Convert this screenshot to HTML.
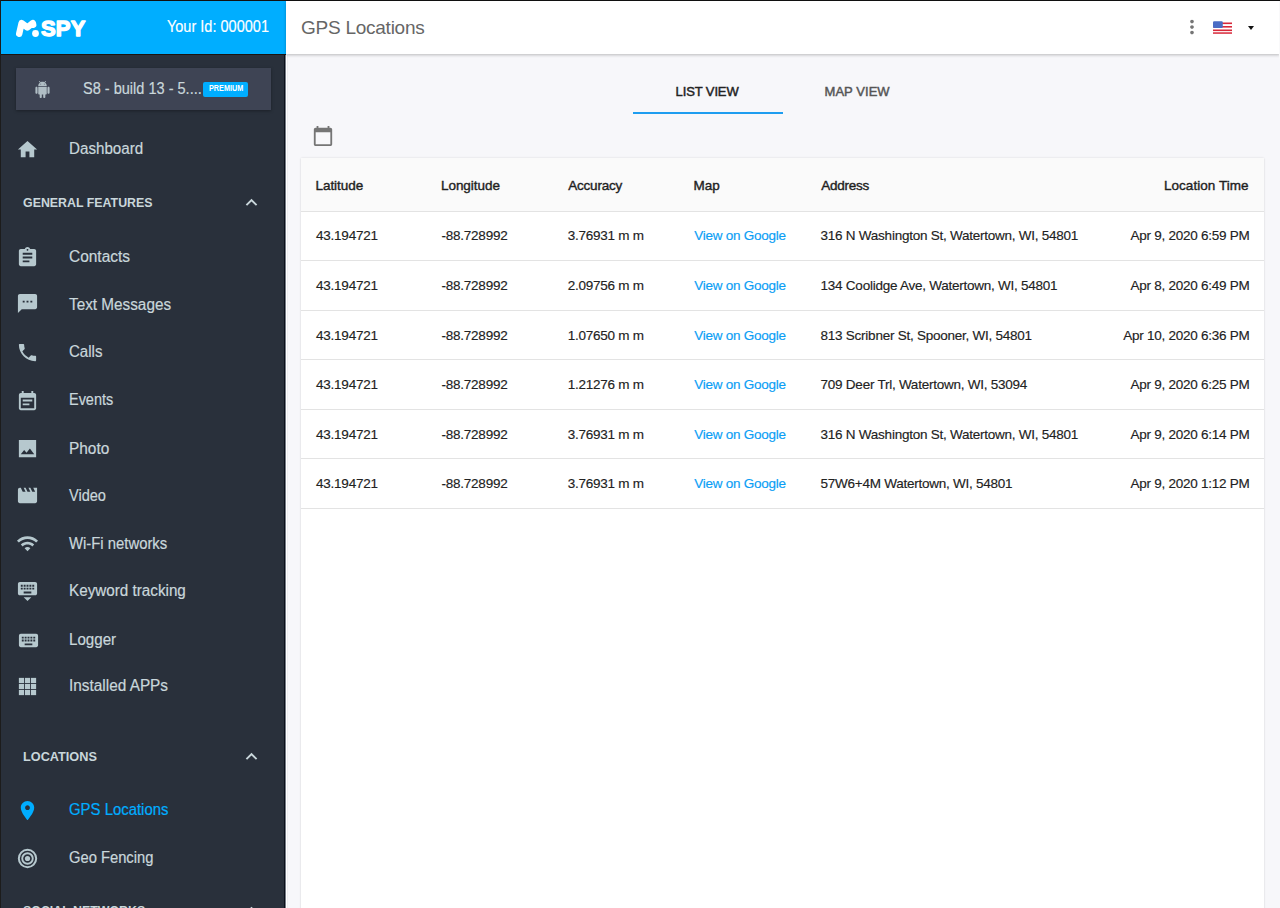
<!DOCTYPE html>
<html><head><meta charset="utf-8"><title>mSpy - GPS Locations</title>
<style>
html,body{margin:0;padding:0;}
body{width:1280px;height:908px;overflow:hidden;position:relative;background:#f7f7fa;font-family:"Liberation Sans",sans-serif;}
.t{position:absolute;white-space:nowrap;line-height:1;}
.ic{position:absolute;display:block;}
.abs{position:absolute;}
</style></head><body>
<div class="abs" style="left:0;top:0;width:1280px;height:1px;background:#111;"></div>
<div class="abs" style="left:0;top:0;width:1px;height:908px;background:#1c1c1c;"></div>
<div class="abs" style="left:1px;top:1px;width:285px;height:53px;background:#00aeff;"></div>
<div class="abs" style="left:1px;top:54px;width:285px;height:854px;background:#29303b;"></div>
<div class="abs" style="left:1px;top:54px;width:285px;height:1px;background:#1b1410;"></div>
<div class="abs" style="left:284px;top:55px;width:1px;height:853px;background:#0b101a;"></div>
<div class="abs" style="left:285px;top:55px;width:1px;height:853px;background:#767b85;"></div>
<div class="abs" style="left:286px;top:55px;width:1px;height:853px;background:#ffffff;"></div>
<div class="abs" style="left:287px;top:55px;width:1px;height:853px;background:#ededf0;"></div>
<div class="abs" style="left:286px;top:1px;width:994px;height:53px;background:#fff;box-shadow:0 1px 3px rgba(0,0,0,.25);"></div>
<div class="abs" style="left:1279px;top:1px;width:1px;height:58px;background:#f9f9fa;"></div>
<svg class="ic" style="left:14px;top:17px;width:76px;height:23px" viewBox="0 0 76 23">
<path d="M5.2 16.8 L7.6 6.1 L13.3 10.4 L18.8 6.1 L19.2 7.8" fill="none" stroke="#fff" stroke-width="6.4" stroke-linecap="round" stroke-linejoin="round"/>
<circle cx="21.5" cy="16.5" r="3.4" fill="#fff"/>
<text x="27" y="18.7" font-family="Liberation Sans" font-weight="700" font-size="22" fill="#fff" stroke="#fff" stroke-width="1.4" stroke-linejoin="round" letter-spacing="0.2">SPY</text>
</svg>
<div class="t" style="right:1011.10px;top:19.03px;font-size:15.8px;color:#fff;font-weight:400;transform:scaleX(0.92);transform-origin:100% 0;-webkit-text-stroke:0.15px #fff;">Your Id: 000001</div>
<div class="t" style="left:301.00px;top:17.72px;font-size:19px;color:#666;font-weight:400;letter-spacing:-0.25px;">GPS Locations</div>
<div class="abs" style="left:16px;top:68.4px;width:255px;height:41.6px;background:#3e4454;box-shadow:0 1px 3px rgba(0,0,0,.35);"></div>
<svg class="ic" style="left:33.80px;top:80.50px;width:17px;height:17px;color:#b0bec5;fill:#b0bec5" viewBox="0 0 24 24"><path d="M6 18c0 .55.45 1 1 1h1v3.5c0 .83.67 1.5 1.5 1.5s1.5-.67 1.5-1.5V19h2v3.5c0 .83.67 1.5 1.5 1.5s1.5-.67 1.5-1.5V19h1c.55 0 1-.45 1-1V8H6v10zM3.5 8C2.67 8 2 8.67 2 9.5v7c0 .83.67 1.5 1.5 1.5S5 17.33 5 16.5v-7C5 8.67 4.33 8 3.5 8zm17 0c-.83 0-1.5.67-1.5 1.5v7c0 .83.67 1.5 1.5 1.5s1.5-.67 1.5-1.5v-7c0-.83-.67-1.5-1.5-1.5zm-4.97-5.84l1.3-1.3c.2-.2.2-.51 0-.71-.2-.2-.51-.2-.71 0l-1.48 1.48C13.85 1.23 12.95 1 12 1c-.96 0-1.86.23-2.66.63L7.85.15c-.2-.2-.51-.2-.71 0-.2.2-.2.51 0 .71l1.31 1.31C6.97 3.26 6 5.01 6 7h12c0-1.99-.97-3.75-2.47-4.84zM10 5H9V4h1v1zm5 0h-1V4h1v1z"/></svg>
<div class="t" style="left:82.60px;top:81.03px;font-size:15.8px;color:#c9d7db;font-weight:400;-webkit-text-stroke:0.2px #c9d7db;transform:scaleX(0.92);transform-origin:0 0;">S8 - build 13 - 5....</div>
<div class="abs" style="left:203px;top:81.5px;width:45.3px;height:15.4px;background:#00aeff;border-radius:2px;"></div>
<div class="t" style="left:208.90px;top:85.46px;font-size:8.2px;color:#fff;font-weight:700;transform:scaleX(0.885);transform-origin:0 0;">PREMIUM</div>
<svg class="ic" style="left:16.00px;top:137.73px;width:23px;height:23px;color:#b6c8ce;fill:#b6c8ce" viewBox="0 0 24 24"><path d="M10 20v-6h4v6h5v-8h3L12 3 2 12h3v8z"/></svg>
<div class="t" style="left:68.70px;top:140.96px;font-size:16px;color:#c9d7db;font-weight:400;transform:scaleX(0.9484);transform-origin:0 0;-webkit-text-stroke:0.2px #c9d7db;">Dashboard</div>
<svg class="ic" style="left:15.75px;top:246.06px;width:23px;height:23px;color:#b6c8ce;fill:#b6c8ce" viewBox="0 0 24 24"><path d="M19 3h-4.18C14.4 1.84 13.3 1 12 1c-1.3 0-2.4.84-2.82 2H5c-1.1 0-2 .9-2 2v14c0 1.1.9 2 2 2h14c1.1 0 2-.9 2-2V5c0-1.1-.9-2-2-2zm-7 0c.55 0 1 .45 1 1s-.45 1-1 1-1-.45-1-1 .45-1 1-1zm2 14H7v-2h7v2zm3-4H7v-2h10v2zm0-4H7V7h10v2z"/></svg>
<div class="t" style="left:68.70px;top:248.66px;font-size:16px;color:#c9d7db;font-weight:400;transform:scaleX(0.9664);transform-origin:0 0;-webkit-text-stroke:0.2px #c9d7db;">Contacts</div>
<svg class="ic" style="left:16.05px;top:292.25px;width:23px;height:23px;color:#b6c8ce;fill:#b6c8ce" viewBox="0 0 24 24"><path d="M20 2H4c-1.1 0-1.99.9-1.99 2L2 22l4-4h14c1.1 0 2-.9 2-2V4c0-1.1-.9-2-2-2zM9 11H7V9h2v2zm4 0h-2V9h2v2zm4 0h-2V9h2v2z"/></svg>
<div class="t" style="left:68.70px;top:296.56px;font-size:16px;color:#c9d7db;font-weight:400;transform:scaleX(0.9563);transform-origin:0 0;-webkit-text-stroke:0.2px #c9d7db;">Text Messages</div>
<svg class="ic" style="left:16.00px;top:340.60px;width:23px;height:23px;color:#b6c8ce;fill:#b6c8ce" viewBox="0 0 24 24"><path d="M6.62 10.79c1.44 2.83 3.76 5.14 6.59 6.59l2.2-2.2c.27-.27.67-.36 1.02-.24 1.12.37 2.33.57 3.57.57.55 0 1 .45 1 1V20c0 .55-.45 1-1 1-9.39 0-17-7.61-17-17 0-.55.45-1 1-1h3.5c.55 0 1 .45 1 1 0 1.25.2 2.45.57 3.57.11.35.03.74-.25 1.02l-2.2 2.2z"/></svg>
<div class="t" style="left:68.70px;top:343.66px;font-size:16px;color:#c9d7db;font-weight:400;transform:scaleX(0.9403);transform-origin:0 0;-webkit-text-stroke:0.2px #c9d7db;">Calls</div>
<svg class="ic" style="left:16.00px;top:389.96px;width:23px;height:23px;color:#b6c8ce;fill:#b6c8ce" viewBox="0 0 24 24"><path d="M17 10H7v2h10v-2zm2-7h-1V1h-2v2H8V1H6v2H5c-1.11 0-1.99.9-1.99 2L3 19c0 1.1.89 2 2 2h14c1.1 0 2-.9 2-2V5c0-1.1-.9-2-2-2zm0 16H5V8h14v11zm-5-5H7v2h7v-2z"/></svg>
<div class="t" style="left:68.70px;top:391.86px;font-size:16px;color:#c9d7db;font-weight:400;transform:scaleX(0.9025);transform-origin:0 0;-webkit-text-stroke:0.2px #c9d7db;">Events</div>
<svg class="ic" style="left:16.05px;top:436.75px;width:23px;height:23px;color:#b6c8ce;fill:#b6c8ce" viewBox="0 0 24 24"><path fill-rule="evenodd" d="M3 3h18v18H3z M8.5 13.5l2.5 3.01L14.5 12l4.5 6H5l3.5-4.5z"/></svg>
<div class="t" style="left:68.70px;top:440.56px;font-size:16px;color:#c9d7db;font-weight:400;transform:scaleX(0.9626);transform-origin:0 0;-webkit-text-stroke:0.2px #c9d7db;">Photo</div>
<svg class="ic" style="left:16.05px;top:484.30px;width:23px;height:23px;color:#b6c8ce;fill:#b6c8ce" viewBox="0 0 24 24"><path d="M18 4l2 4h-3l-2-4h-2l2 4h-3l-2-4H8l2 4H7L5 4H4c-1.1 0-1.99.9-1.99 2L2 18c0 1.1.9 2 2 2h16c1.1 0 2-.9 2-2V4h-4z"/></svg>
<div class="t" style="left:68.70px;top:487.86px;font-size:16px;color:#c9d7db;font-weight:400;transform:scaleX(0.9098);transform-origin:0 0;-webkit-text-stroke:0.2px #c9d7db;">Video</div>
<svg class="ic" style="left:15.85px;top:531.81px;width:23px;height:23px;color:#b6c8ce;fill:#b6c8ce" viewBox="0 0 24 24"><path d="M1 9l2 2c4.97-4.97 13.03-4.97 18 0l2-2C16.93 2.93 7.08 2.93 1 9zm8 8l3 3 3-3c-1.65-1.66-4.34-1.66-6 0zm-4-4l2 2c2.76-2.76 7.24-2.76 10 0l2-2C15.14 9.14 8.87 9.14 5 13z"/></svg>
<div class="t" style="left:68.70px;top:536.26px;font-size:16px;color:#c9d7db;font-weight:400;transform:scaleX(0.9283);transform-origin:0 0;-webkit-text-stroke:0.2px #c9d7db;">Wi-Fi networks</div>
<svg class="ic" style="left:16.05px;top:578.59px;width:23px;height:23px;color:#b6c8ce;fill:#b6c8ce" viewBox="0 0 24 24"><path d="M20 3H4c-1.1 0-1.99.9-1.99 2L2 15c0 1.1.9 2 2 2h16c1.1 0 2-.9 2-2V5c0-1.1-.9-2-2-2zm-9 3h2v2h-2V6zm0 3h2v2h-2V9zM8 6h2v2H8V6zm0 3h2v2H8V9zm-1 2H5V9h2v2zm0-3H5V6h2v2zm9 7H8v-2h8v2zm0-4h-2V9h2v2zm0-3h-2V6h2v2zm3 3h-2V9h2v2zm0-3h-2V6h2v2zm-7 15l4-4H8l4 4z"/></svg>
<div class="t" style="left:68.70px;top:583.36px;font-size:16px;color:#c9d7db;font-weight:400;transform:scaleX(0.9519);transform-origin:0 0;-webkit-text-stroke:0.2px #c9d7db;">Keyword tracking</div>
<svg class="ic" style="left:16.55px;top:628.55px;width:23px;height:23px;color:#b6c8ce;fill:#b6c8ce" viewBox="0 0 24 24"><path d="M20 5H4c-1.1 0-1.99.9-1.99 2L2 17c0 1.1.9 2 2 2h16c1.1 0 2-.9 2-2V7c0-1.1-.9-2-2-2zm-9 3h2v2h-2V8zm0 3h2v2h-2v-2zM8 8h2v2H8V8zm0 3h2v2H8v-2zm-1 2H5v-2h2v2zm0-3H5V8h2v2zm9 7H8v-2h8v2zm0-4h-2v-2h2v2zm0-3h-2V8h2v2zm3 3h-2v-2h2v2zm0-3h-2V8h2v2z"/></svg>
<div class="t" style="left:68.70px;top:632.26px;font-size:16px;color:#c9d7db;font-weight:400;transform:scaleX(0.9457);transform-origin:0 0;-webkit-text-stroke:0.2px #c9d7db;">Logger</div>
<svg class="ic" style="left:16.00px;top:675.20px;width:23px;height:23px;color:#b6c8ce;fill:#b6c8ce" viewBox="0 0 24 24"><rect x="3.00" y="3.00" width="5.4" height="5.4"/><rect x="9.30" y="3.00" width="5.4" height="5.4"/><rect x="15.60" y="3.00" width="5.4" height="5.4"/><rect x="3.00" y="9.30" width="5.4" height="5.4"/><rect x="9.30" y="9.30" width="5.4" height="5.4"/><rect x="15.60" y="9.30" width="5.4" height="5.4"/><rect x="3.00" y="15.60" width="5.4" height="5.4"/><rect x="9.30" y="15.60" width="5.4" height="5.4"/><rect x="15.60" y="15.60" width="5.4" height="5.4"/></svg>
<div class="t" style="left:68.70px;top:678.46px;font-size:16px;color:#c9d7db;font-weight:400;transform:scaleX(0.9600);transform-origin:0 0;-webkit-text-stroke:0.2px #c9d7db;">Installed APPs</div>
<svg class="ic" style="left:15.85px;top:798.90px;width:23px;height:23px;color:#00adff;fill:#00adff" viewBox="0 0 24 24"><path d="M12 2C8.13 2 5 5.13 5 9c0 5.25 7 13 7 13s7-7.75 7-13c0-3.87-3.13-7-7-7zm0 9.5c-1.38 0-2.5-1.12-2.5-2.5s1.12-2.5 2.5-2.5 2.5 1.12 2.5 2.5-1.12 2.5-2.5 2.5z"/></svg>
<div class="t" style="left:68.70px;top:802.16px;font-size:16px;color:#00adff;font-weight:400;transform:scaleX(0.9318);transform-origin:0 0;-webkit-text-stroke:0.2px #00adff;">GPS Locations</div>
<svg class="ic" style="left:16.05px;top:846.80px;width:23px;height:23px;color:#b6c8ce;fill:#b6c8ce" viewBox="0 0 24 24"><circle cx="12" cy="12" r="9.05" fill="none" stroke="currentColor" stroke-width="2.1"/><circle cx="12" cy="12" r="5.5" fill="none" stroke="currentColor" stroke-width="2"/><circle cx="12" cy="12" r="2.7"/></svg>
<div class="t" style="left:68.70px;top:850.16px;font-size:16px;color:#c9d7db;font-weight:400;transform:scaleX(0.9208);transform-origin:0 0;-webkit-text-stroke:0.2px #c9d7db;">Geo Fencing</div>
<div class="t" style="left:23.20px;top:196.06px;font-size:13.4px;color:#c9d7db;font-weight:700;transform:scaleX(0.9244);transform-origin:0 0;">GENERAL FEATURES</div>
<svg class="ic" style="left:240.10px;top:190.99px;width:23px;height:23px;color:#c9d7db;fill:#c9d7db" viewBox="0 0 24 24"><path d="M12 8l-6 6 1.41 1.41L12 10.83l4.59 4.58L18 14z"/></svg>
<div class="t" style="left:23.20px;top:750.06px;font-size:13.4px;color:#c9d7db;font-weight:700;transform:scaleX(0.9487);transform-origin:0 0;">LOCATIONS</div>
<svg class="ic" style="left:240.10px;top:744.99px;width:23px;height:23px;color:#c9d7db;fill:#c9d7db" viewBox="0 0 24 24"><path d="M12 8l-6 6 1.41 1.41L12 10.83l4.59 4.58L18 14z"/></svg>
<div class="t" style="left:23.20px;top:904.06px;font-size:13.4px;color:#c9d7db;font-weight:700;transform:scaleX(0.9240);transform-origin:0 0;">SOCIAL NETWORKS</div>
<svg class="ic" style="left:240.10px;top:898.99px;width:23px;height:23px;color:#c9d7db;fill:#c9d7db" viewBox="0 0 24 24"><path d="M12 8l-6 6 1.41 1.41L12 10.83l4.59 4.58L18 14z"/></svg>
<div class="t" style="left:675.60px;top:85.20px;font-size:13.0px;color:#222;font-weight:400;letter-spacing:-0.12px;-webkit-text-stroke:0.45px #222;">LIST VIEW</div>
<div class="t" style="left:824.50px;top:85.20px;font-size:13.0px;color:#555;font-weight:400;letter-spacing:0.05px;-webkit-text-stroke:0.45px #555;">MAP VIEW</div>
<div class="abs" style="left:633px;top:112px;width:150px;height:2px;background:#1e9df0;"></div>
<svg class="ic" style="left:311.80px;top:124.50px;width:22px;height:22px;color:#757575;fill:#757575" viewBox="0 0 24 24"><path d="M20 3h-1V1h-2v2H7V1H5v2H4c-1.1 0-2 .9-2 2v16c0 1.1.9 2 2 2h16c1.1 0 2-.9 2-2V5c0-1.1-.9-2-2-2zm0 18H4V8h16v13z"/></svg>
<div class="abs" style="left:300.5px;top:158px;width:963.5px;height:760px;background:#fff;box-shadow:0 0 2px rgba(0,0,0,.12),0 1px 1px rgba(0,0,0,.08);"></div>
<div class="abs" style="left:300.5px;top:158px;width:963.5px;height:53px;background:#fafafa;"></div>
<div class="abs" style="left:300.5px;top:211.0px;width:963.5px;height:1px;background:#e3e3e3;"></div>
<div class="abs" style="left:300.5px;top:260.0px;width:963.5px;height:1px;background:#e3e3e3;"></div>
<div class="abs" style="left:300.5px;top:310.0px;width:963.5px;height:1px;background:#e3e3e3;"></div>
<div class="abs" style="left:300.5px;top:359.0px;width:963.5px;height:1px;background:#e3e3e3;"></div>
<div class="abs" style="left:300.5px;top:409.0px;width:963.5px;height:1px;background:#e3e3e3;"></div>
<div class="abs" style="left:300.5px;top:458.0px;width:963.5px;height:1px;background:#e3e3e3;"></div>
<div class="abs" style="left:300.5px;top:508.0px;width:963.5px;height:1px;background:#e3e3e3;"></div>
<div class="t" style="left:315.50px;top:178.87px;font-size:13.5px;color:#1f1f1f;font-weight:400;letter-spacing:-0.05px;-webkit-text-stroke:0.4px #1f1f1f;">Latitude</div>
<div class="t" style="left:441.00px;top:178.87px;font-size:13.5px;color:#1f1f1f;font-weight:400;letter-spacing:-0.05px;-webkit-text-stroke:0.4px #1f1f1f;">Longitude</div>
<div class="t" style="left:568.20px;top:178.87px;font-size:13.5px;color:#1f1f1f;font-weight:400;letter-spacing:-0.2px;-webkit-text-stroke:0.4px #1f1f1f;">Accuracy</div>
<div class="t" style="left:693.60px;top:178.87px;font-size:13.5px;color:#1f1f1f;font-weight:400;letter-spacing:-0.05px;-webkit-text-stroke:0.4px #1f1f1f;">Map</div>
<div class="t" style="left:821.30px;top:178.87px;font-size:13.5px;color:#1f1f1f;font-weight:400;letter-spacing:-0.25px;-webkit-text-stroke:0.4px #1f1f1f;">Address</div>
<div class="t" style="right:31.40px;top:178.87px;font-size:13.5px;color:#1f1f1f;font-weight:400;letter-spacing:0.05px;-webkit-text-stroke:0.4px #1f1f1f;">Location Time</div>
<div class="t" style="left:316.10px;top:229.37px;font-size:13.5px;color:#222;font-weight:400;letter-spacing:-0.25px;-webkit-text-stroke:0.15px #222;">43.194721</div>
<div class="t" style="left:441.60px;top:229.37px;font-size:13.5px;color:#222;font-weight:400;letter-spacing:-0.25px;-webkit-text-stroke:0.15px #222;">-88.728992</div>
<div class="t" style="left:567.80px;top:229.37px;font-size:13.5px;color:#222;font-weight:400;letter-spacing:-0.25px;-webkit-text-stroke:0.15px #222;">3.76931 m m</div>
<div class="t" style="left:694.20px;top:229.37px;font-size:13.5px;color:#0a9ef5;font-weight:400;letter-spacing:-0.25px;-webkit-text-stroke:0.15px #0a9ef5;">View on Google</div>
<div class="t" style="left:820.60px;top:229.37px;font-size:13.5px;color:#222;font-weight:400;letter-spacing:-0.25px;-webkit-text-stroke:0.15px #222;">316 N Washington St, Watertown, WI, 54801</div>
<div class="t" style="right:30.50px;top:229.37px;font-size:13.5px;color:#222;font-weight:400;letter-spacing:-0.25px;-webkit-text-stroke:0.15px #222;">Apr 9, 2020 6:59 PM</div>
<div class="t" style="left:316.10px;top:278.97px;font-size:13.5px;color:#222;font-weight:400;letter-spacing:-0.25px;-webkit-text-stroke:0.15px #222;">43.194721</div>
<div class="t" style="left:441.60px;top:278.97px;font-size:13.5px;color:#222;font-weight:400;letter-spacing:-0.25px;-webkit-text-stroke:0.15px #222;">-88.728992</div>
<div class="t" style="left:567.80px;top:278.97px;font-size:13.5px;color:#222;font-weight:400;letter-spacing:-0.25px;-webkit-text-stroke:0.15px #222;">2.09756 m m</div>
<div class="t" style="left:694.20px;top:278.97px;font-size:13.5px;color:#0a9ef5;font-weight:400;letter-spacing:-0.25px;-webkit-text-stroke:0.15px #0a9ef5;">View on Google</div>
<div class="t" style="left:820.60px;top:278.97px;font-size:13.5px;color:#222;font-weight:400;letter-spacing:-0.25px;-webkit-text-stroke:0.15px #222;">134 Coolidge Ave, Watertown, WI, 54801</div>
<div class="t" style="right:30.50px;top:278.97px;font-size:13.5px;color:#222;font-weight:400;letter-spacing:-0.25px;-webkit-text-stroke:0.15px #222;">Apr 8, 2020 6:49 PM</div>
<div class="t" style="left:316.10px;top:328.57px;font-size:13.5px;color:#222;font-weight:400;letter-spacing:-0.25px;-webkit-text-stroke:0.15px #222;">43.194721</div>
<div class="t" style="left:441.60px;top:328.57px;font-size:13.5px;color:#222;font-weight:400;letter-spacing:-0.25px;-webkit-text-stroke:0.15px #222;">-88.728992</div>
<div class="t" style="left:567.80px;top:328.57px;font-size:13.5px;color:#222;font-weight:400;letter-spacing:-0.25px;-webkit-text-stroke:0.15px #222;">1.07650 m m</div>
<div class="t" style="left:694.20px;top:328.57px;font-size:13.5px;color:#0a9ef5;font-weight:400;letter-spacing:-0.25px;-webkit-text-stroke:0.15px #0a9ef5;">View on Google</div>
<div class="t" style="left:820.60px;top:328.57px;font-size:13.5px;color:#222;font-weight:400;letter-spacing:-0.25px;-webkit-text-stroke:0.15px #222;">813 Scribner St, Spooner, WI, 54801</div>
<div class="t" style="right:30.50px;top:328.57px;font-size:13.5px;color:#222;font-weight:400;letter-spacing:-0.25px;-webkit-text-stroke:0.15px #222;">Apr 10, 2020 6:36 PM</div>
<div class="t" style="left:316.10px;top:378.17px;font-size:13.5px;color:#222;font-weight:400;letter-spacing:-0.25px;-webkit-text-stroke:0.15px #222;">43.194721</div>
<div class="t" style="left:441.60px;top:378.17px;font-size:13.5px;color:#222;font-weight:400;letter-spacing:-0.25px;-webkit-text-stroke:0.15px #222;">-88.728992</div>
<div class="t" style="left:567.80px;top:378.17px;font-size:13.5px;color:#222;font-weight:400;letter-spacing:-0.25px;-webkit-text-stroke:0.15px #222;">1.21276 m m</div>
<div class="t" style="left:694.20px;top:378.17px;font-size:13.5px;color:#0a9ef5;font-weight:400;letter-spacing:-0.25px;-webkit-text-stroke:0.15px #0a9ef5;">View on Google</div>
<div class="t" style="left:820.60px;top:378.17px;font-size:13.5px;color:#222;font-weight:400;letter-spacing:-0.25px;-webkit-text-stroke:0.15px #222;">709 Deer Trl, Watertown, WI, 53094</div>
<div class="t" style="right:30.50px;top:378.17px;font-size:13.5px;color:#222;font-weight:400;letter-spacing:-0.25px;-webkit-text-stroke:0.15px #222;">Apr 9, 2020 6:25 PM</div>
<div class="t" style="left:316.10px;top:427.77px;font-size:13.5px;color:#222;font-weight:400;letter-spacing:-0.25px;-webkit-text-stroke:0.15px #222;">43.194721</div>
<div class="t" style="left:441.60px;top:427.77px;font-size:13.5px;color:#222;font-weight:400;letter-spacing:-0.25px;-webkit-text-stroke:0.15px #222;">-88.728992</div>
<div class="t" style="left:567.80px;top:427.77px;font-size:13.5px;color:#222;font-weight:400;letter-spacing:-0.25px;-webkit-text-stroke:0.15px #222;">3.76931 m m</div>
<div class="t" style="left:694.20px;top:427.77px;font-size:13.5px;color:#0a9ef5;font-weight:400;letter-spacing:-0.25px;-webkit-text-stroke:0.15px #0a9ef5;">View on Google</div>
<div class="t" style="left:820.60px;top:427.77px;font-size:13.5px;color:#222;font-weight:400;letter-spacing:-0.25px;-webkit-text-stroke:0.15px #222;">316 N Washington St, Watertown, WI, 54801</div>
<div class="t" style="right:30.50px;top:427.77px;font-size:13.5px;color:#222;font-weight:400;letter-spacing:-0.25px;-webkit-text-stroke:0.15px #222;">Apr 9, 2020 6:14 PM</div>
<div class="t" style="left:316.10px;top:477.37px;font-size:13.5px;color:#222;font-weight:400;letter-spacing:-0.25px;-webkit-text-stroke:0.15px #222;">43.194721</div>
<div class="t" style="left:441.60px;top:477.37px;font-size:13.5px;color:#222;font-weight:400;letter-spacing:-0.25px;-webkit-text-stroke:0.15px #222;">-88.728992</div>
<div class="t" style="left:567.80px;top:477.37px;font-size:13.5px;color:#222;font-weight:400;letter-spacing:-0.25px;-webkit-text-stroke:0.15px #222;">3.76931 m m</div>
<div class="t" style="left:694.20px;top:477.37px;font-size:13.5px;color:#0a9ef5;font-weight:400;letter-spacing:-0.25px;-webkit-text-stroke:0.15px #0a9ef5;">View on Google</div>
<div class="t" style="left:820.60px;top:477.37px;font-size:13.5px;color:#222;font-weight:400;letter-spacing:-0.25px;-webkit-text-stroke:0.15px #222;">57W6+4M Watertown, WI, 54801</div>
<div class="t" style="right:30.50px;top:477.37px;font-size:13.5px;color:#222;font-weight:400;letter-spacing:-0.25px;-webkit-text-stroke:0.15px #222;">Apr 9, 2020 1:12 PM</div>
<svg class="ic" style="left:1181.30px;top:16.30px;width:22px;height:22px;color:#757575;fill:#757575" viewBox="0 0 24 24"><path d="M12 8c1.1 0 2-.9 2-2s-.9-2-2-2-2 .9-2 2 .9 2 2 2zm0 2c-1.1 0-2 .9-2 2s.9 2 2 2 2-.9 2-2-.9-2-2-2zm0 6c-1.1 0-2 .9-2 2s.9 2 2 2 2-.9 2-2-.9-2-2-2z"/></svg>
<svg class="ic" style="left:1213px;top:21px;width:19px;height:13px" viewBox="0 0 19 13">
<rect x="0" y="1" width="19" height="12" fill="#fff"/>
<rect x="0" y="1.5" width="19" height="1.6" fill="#d8283a"/>
<rect x="0" y="5" width="19" height="1.6" fill="#d8283a"/>
<rect x="0" y="8.5" width="19" height="1.6" fill="#d8283a"/>
<rect x="0" y="11.3" width="19" height="1.5" fill="#d8283a"/>
<rect x="0" y="0.2" width="9.8" height="6.8" rx="1.2" fill="#4a6cc4"/>
</svg>
<div class="abs" style="left:1247.5px;top:25.7px;width:0;height:0;border-left:3.8px solid transparent;border-right:3.8px solid transparent;border-top:4.5px solid #111;"></div>
</body></html>
